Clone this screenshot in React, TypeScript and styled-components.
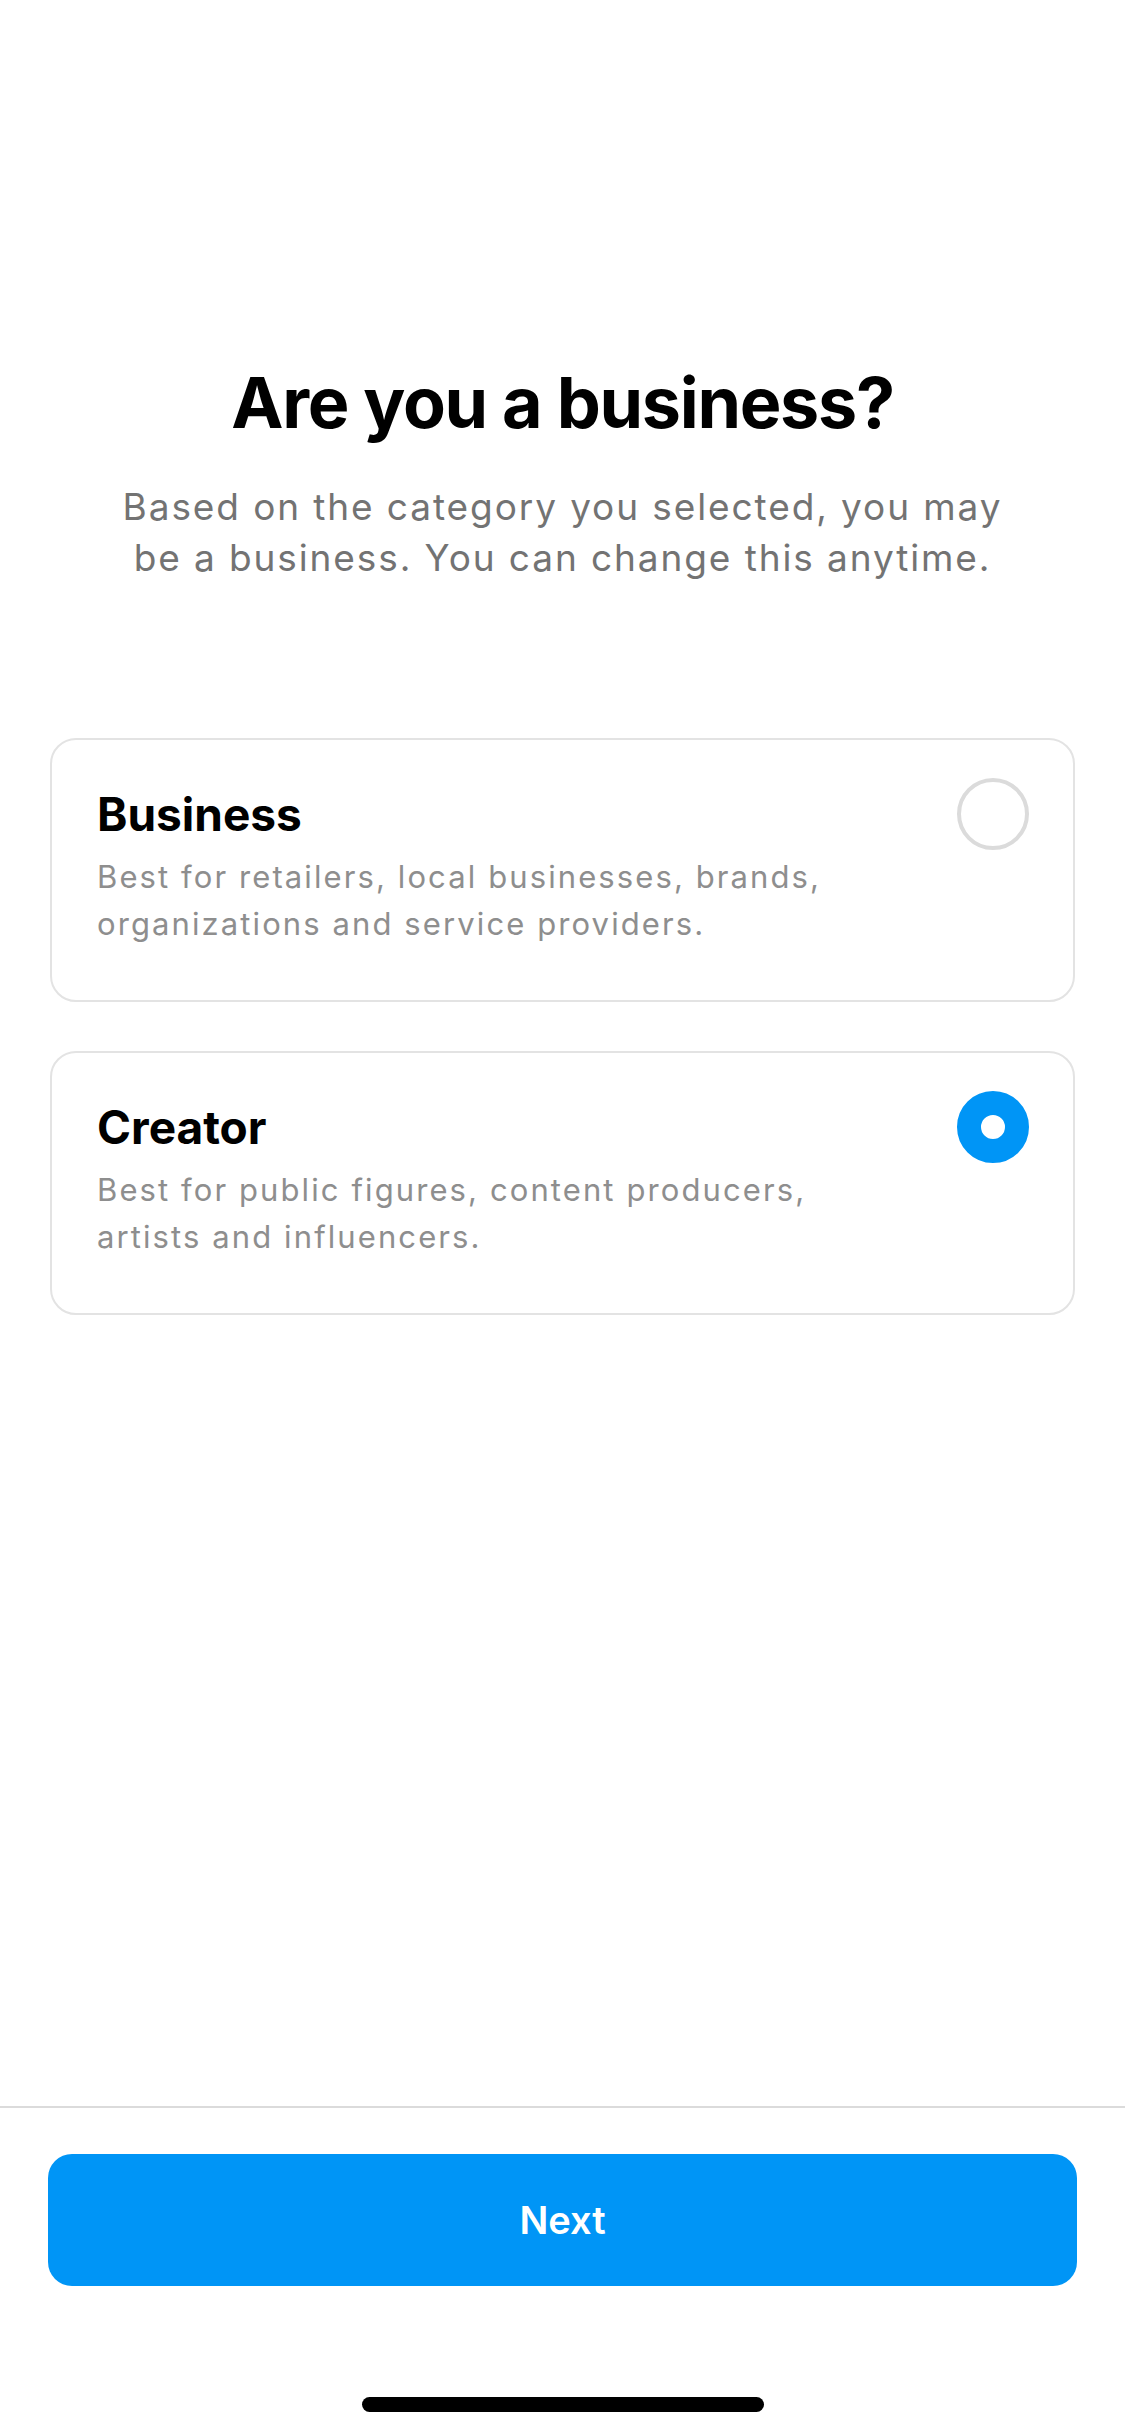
import React, { useState } from "react";
import styled, { createGlobalStyle } from "styled-components";

const COLORS = {
  blue: "#0095f6",
  text: "#000000",
  sub: "#737373",
  desc: "#8e8e8e",
  border: "#e3e3e3",
  radio: "#dbdbdb",
};

type Option = {
  id: string;
  title: string;
  desc: string;
};

const OPTIONS: Option[] = [
  {
    id: "business",
    title: "Business",
    desc: "Best for retailers, local businesses, brands, organizations and service providers.",
  },
  {
    id: "creator",
    title: "Creator",
    desc: "Best for public figures, content producers, artists and influencers.",
  },
];

const App = () => {
  const [selected, setSelected] = useState<string>("creator");

  return (
    <>
      <GlobalStyle />
      <StyledPage>
        <Content>
          <Title>Are you a business?</Title>
          <Subtitle>
            Based on the category you selected, you may be a business. You can
            change this anytime.
          </Subtitle>
          <OptionList>
            {OPTIONS.map((opt) => (
              <Card key={opt.id} onClick={() => setSelected(opt.id)}>
                <CardText>
                  <CardTitle>{opt.title}</CardTitle>
                  <CardDesc>{opt.desc}</CardDesc>
                </CardText>
                <Radio $checked={selected === opt.id} />
              </Card>
            ))}
          </OptionList>
        </Content>
        <Footer>
          <NextButton>Next</NextButton>
          <HomeBar />
        </Footer>
      </StyledPage>
    </>
  );
};

export default App;

const GlobalStyle = createGlobalStyle`
  html, body {
    margin: 0;
    padding: 0;
    background: #ffffff;
  }
  * {
    box-sizing: border-box;
  }
  body {
    font-family: Inter, "Noto Sans", "Liberation Sans", sans-serif;
    -webkit-font-smoothing: antialiased;
  }
`;

const StyledPage = styled.div`
  width: 1125px;
  height: 2436px;
  display: flex;
  flex-direction: column;
  background: #ffffff;
`;

const Content = styled.main`
  flex: 1;
  padding: 360px 50px 0;
  display: flex;
  flex-direction: column;
  align-items: center;
`;

const Title = styled.h1`
  margin: 0;
  font-size: 70px;
  line-height: 86px;
  font-weight: 700;
  letter-spacing: -1.3px;
  color: ${COLORS.text};
  text-align: center;
`;

const Subtitle = styled.p`
  margin: 35px 0 0;
  max-width: 920px;
  font-size: 37px;
  line-height: 51px;
  font-weight: 400;
  letter-spacing: 1.9px;
  color: ${COLORS.sub};
  text-align: center;
`;

const OptionList = styled.div`
  width: 100%;
  margin-top: 155px;
  display: flex;
  flex-direction: column;
  gap: 49px;
`;

const Card = styled.div`
  display: flex;
  align-items: flex-start;
  justify-content: space-between;
  border: 2px solid ${COLORS.border};
  border-radius: 26px;
  padding: 38px 44px 53px 45px;
  cursor: pointer;
`;

const CardText = styled.div`
  width: 770px;
  display: flex;
  flex-direction: column;
  padding-top: 9px;
`;

const CardTitle = styled.span`
  font-size: 46px;
  line-height: 54px;
  font-weight: 700;
  color: ${COLORS.text};
`;

const CardDesc = styled.span`
  margin-top: 12px;
  font-size: 31px;
  line-height: 47px;
  letter-spacing: 2.1px;
  color: ${COLORS.desc};
`;

const Radio = styled.span<{ $checked: boolean }>`
  flex: none;
  width: 72px;
  height: 72px;
  border-radius: 50%;
  background: #ffffff;
  border: ${(p) =>
    p.$checked ? `24px solid ${COLORS.blue}` : `4px solid ${COLORS.radio}`};
`;

const Footer = styled.footer`
  display: flex;
  flex-direction: column;
  align-items: center;
  border-top: 2px solid #dbdbdb;
  padding: 46px 48px 24px;
`;

const NextButton = styled.button`
  width: 100%;
  height: 132px;
  border: none;
  border-radius: 24px;
  background: ${COLORS.blue};
  color: #ffffff;
  font-family: inherit;
  font-size: 38px;
  font-weight: 600;
  cursor: pointer;
`;

const HomeBar = styled.div`
  margin-top: 111px;
  width: 402px;
  height: 15px;
  border-radius: 8px;
  background: #000000;
`;
